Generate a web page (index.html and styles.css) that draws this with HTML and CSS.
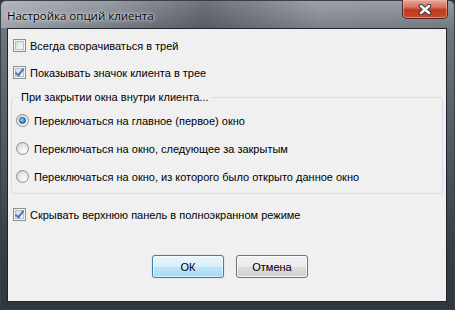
FILE: index.html
```html
<!DOCTYPE html>
<html lang="ru">

<head>
    <meta charset="utf-8">
    <title>Настройка опций клиента</title>
    <link rel="stylesheet" href="styles.css">
</head>

<body>
    <div class="vindue">
        <header class="titel">
            <h1>Настройка опций клиента</h1>
            <button class="luk" aria-label="Закрыть">
                <svg width="14" height="11" viewBox="0 0 14 11">
                    <path d="M3 2 L11 9 M11 2 L3 9" stroke="#3b3b3b" stroke-width="4.4" stroke-linecap="round" fill="none" />
                    <path d="M3 2 L11 9 M11 2 L3 9" stroke="#ffffff" stroke-width="2.4" stroke-linecap="round" fill="none" />
                </svg>
            </button>
        </header>

        <main class="indhold">
            <label class="valg">
                <span class="boks"></span>
                Всегда сворачиваться в трей
            </label>
            <label class="valg anden">
                <span class="boks tjek"></span>
                Показывать значок клиента в трее
            </label>

            <fieldset class="gruppe">
                <legend>При закрытии окна внутри клиента...</legend>
                <label class="radio">
                    <span class="rund valgt"></span>
                    Переключаться на главное (первое) окно
                </label>
                <label class="radio">
                    <span class="rund"></span>
                    Переключаться на окно, следующее за закрытым
                </label>
                <label class="radio">
                    <span class="rund"></span>
                    Переключаться на окно, из которого было открыто данное окно
                </label>
            </fieldset>

            <label class="valg skjul">
                <span class="boks tjek"></span>
                Скрывать верхнюю панель в полноэкранном режиме
            </label>

            <nav class="knapper">
                <button class="knap standard">ОК</button>
                <button class="knap">Отмена</button>
            </nav>
        </main>
    </div>
</body>

</html>
```

FILE: styles.css
```css
body {
    margin: 0;
    background-color: #2f343b;
}

.vindue {
    width: 455px;
    height: 310px;
    box-sizing: border-box;
    border: 1px solid #3a4049;
    border-radius: 6px 6px 4px 4px;
    background: linear-gradient(to bottom, #9ea3a8 0, #6f757c 30px, #535a63 45%, #373e48 80%, #2f3640 100%);
    display: flex;
    flex-direction: column;
    font-family: "Liberation Sans", Arial, sans-serif;
}

.titel {
    height: 27px;
    display: flex;
    justify-content: space-between;
    align-items: flex-start;
    background: linear-gradient(to right, rgba(200, 204, 208, 0.5) 0, rgba(120, 126, 133, 0.2) 25%, rgba(40, 46, 54, 0.4) 45%, rgba(150, 155, 160, 0.25) 70%, rgba(110, 116, 122, 0.2) 100%);
    border-radius: 5px 5px 0 0;
}

.titel h1 {
    margin: 7px 0 0 6px;
    font-family: "Open Sans", "Noto Sans", sans-serif;
    font-size: 11.5px;
    font-weight: normal;
    color: #000;
    text-shadow: 0 0 5px rgba(255, 255, 255, 0.9), 0 0 2px rgba(255, 255, 255, 0.8);
}

.luk {
    width: 46px;
    height: 19px;
    margin: -1px 6px 0 0;
    padding: 0;
    border: 1px solid #4a2a26;
    border-top: none;
    border-radius: 0 0 5px 5px;
    background: linear-gradient(to bottom, #e3a99b 0, #d3715c 40%, #c3371b 55%, #c94b2f 100%);
    box-shadow: inset 0 0 0 1px rgba(255, 190, 170, 0.5);
    display: flex;
    align-items: center;
    justify-content: center;
}

.indhold {
    flex: 1;
    margin: 0 7px 7px 6px;
    border: 1px solid #1d232b;
    background-color: #f0f0f0;
    display: flex;
    flex-direction: column;
    padding: 10px 0 0 5px;
    font-size: 11px;
    color: #000;
}

.valg,
.radio {
    display: flex;
    align-items: center;
    height: 13px;
    gap: 4px;
    white-space: nowrap;
}

.anden {
    margin-top: 14px;
}

.skjul {
    margin-top: 14px;
}

.boks {
    width: 11px;
    height: 11px;
    border: 1px solid #8e8f8f;
    background: linear-gradient(135deg, #d0d3d8 0, #eef0f2 60%, #fbfbfb 100%);
    box-shadow: inset 0 0 0 1px #f4f4f4, inset 0 0 0 2px #b9bdc2;
    position: relative;
}

.tjek::after {
    content: "";
    position: absolute;
    left: 3px;
    top: 0;
    width: 3px;
    height: 7px;
    border-right: 2px solid #4d6fb8;
    border-bottom: 2px solid #4d6fb8;
    transform: rotate(38deg);
}

.gruppe {
    margin: 12px 3px 0 -2px;
    padding: 0 0 10px 3px;
    border: 1px solid #d5dfe5;
    border-radius: 3px;
    display: flex;
    flex-direction: column;
    gap: 15px;
    min-inline-size: 0;
}

.gruppe legend {
    margin-left: 3px;
    padding: 0 3px;
    line-height: 13px;
}

.gruppe .radio:first-of-type {
    margin-top: 10px;
}

.radio {
    margin-left: 1px;
    gap: 5px;
}

.rund {
    width: 11px;
    height: 11px;
    border: 1px solid #8e8f8f;
    border-radius: 50%;
    background: radial-gradient(circle at 65% 70%, #fdfdfd 0, #e4e6e8 50%, #c5c9cd 100%);
    position: relative;
}

.valgt::after {
    content: "";
    position: absolute;
    left: 2px;
    top: 2px;
    width: 5px;
    height: 5px;
    border: 1px solid #1b4f8a;
    border-radius: 50%;
    background: radial-gradient(circle at 35% 35%, #a9dcf9 0, #3f8ed3 55%, #1a5fa4 100%);
}

.knapper {
    display: flex;
    justify-content: center;
    gap: 12px;
    margin-top: 34px;
    padding-left: 1px;
}

.knap {
    width: 72px;
    height: 23px;
    border: 1px solid #707070;
    border-radius: 3px;
    background: linear-gradient(to bottom, #f2f2f2 0, #ebebeb 50%, #dddddd 51%, #cfcfcf 100%);
    box-shadow: inset 0 0 0 1px rgba(255, 255, 255, 0.8);
    font-family: "Liberation Sans", Arial, sans-serif;
    font-size: 11px;
    color: #000;
    padding: 0;
}

.standard {
    border-color: #3c7fb1;
    background: linear-gradient(to bottom, #eaf6fd 0, #d9f0fc 50%, #bee6fd 51%, #a7d9f5 100%);
    box-shadow: inset 0 0 0 1px rgba(255, 255, 255, 0.6), 0 0 1px #48a6e0;
}
```
